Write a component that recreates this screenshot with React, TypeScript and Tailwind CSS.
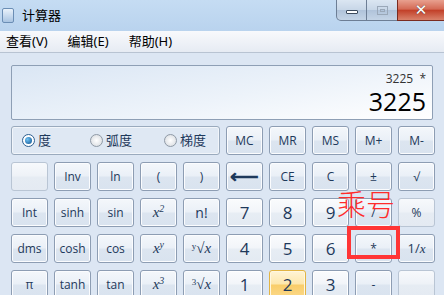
import React from "react";

const cjk = "'Noto Sans', 'Noto Sans CJK SC', sans-serif";

type Kind = "fn" | "digit" | "hot" | "pale";

interface Key {
  label: React.ReactNode;
  kind?: Kind;
}

function Btn({ label, kind = "fn" }: Key) {
  const base =
    "flex h-[29px] w-[37px] items-center justify-center rounded-[3px] border text-[#1e395b] leading-none";
  const skin: Record<Kind, string> = {
    fn: "border-[#8d9db3] bg-[linear-gradient(#f4f7fb_0%,#eaf0f7_48%,#dce5f0_52%,#d9e3ef_100%)] shadow-[inset_0_0_0_1px_#fbfcfe] text-[12px]",
    digit:
      "border-[#8d9db3] bg-[linear-gradient(#fafbfd_0%,#f2f5f9_48%,#e7edf4_52%,#e3eaf2_100%)] shadow-[inset_0_0_0_1px_#ffffff] text-[17px]",
    hot: "border-[#e2b443] bg-[linear-gradient(#fff4d6_0%,#fde7ad_48%,#f9cd6a_52%,#fbd98a_100%)] shadow-[inset_0_0_0_1px_#fff7e0] text-[17px]",
    pale: "border-[#b9c5d4] bg-[linear-gradient(#f7f9fc_0%,#eef2f7_48%,#e6ecf3_52%,#e4eaf2_100%)] text-[12px]",
  };
  return (
    <div className={`${base} ${skin[kind]}`} style={{ fontFamily: "'Open Sans', 'Noto Sans', sans-serif" }}>
      {label}
    </div>
  );
}

const M = ({ children }: { children: React.ReactNode }) => (
  <span className="text-[15px] italic" style={{ fontFamily: "'Liberation Serif', 'DejaVu Serif', serif" }}>
    {children}
  </span>
);

const left: Key[][] = [
  [{ label: "" , kind: "pale" }, { label: "Inv" }, { label: "ln" }, { label: "(" }, { label: ")" }],
  [
    { label: "Int" },
    { label: "sinh" },
    { label: "sin" },
    { label: <M>x<sup className="text-[10px]">2</sup></M> },
    { label: <span className="text-[14px]">n!</span> },
  ],
  [
    { label: "dms" },
    { label: "cosh" },
    { label: "cos" },
    { label: <M>x<sup className="text-[10px]">y</sup></M> },
    { label: <M><sup className="text-[9px] not-italic">y</sup>√x</M> },
  ],
  [
    { label: "π" },
    { label: "tanh" },
    { label: "tan" },
    { label: <M>x<sup className="text-[10px]">3</sup></M> },
    { label: <M><sup className="text-[9px] not-italic">3</sup>√x</M> },
  ],
];

const right: Key[][] = [
  [{ label: "MC" }, { label: "MR" }, { label: "MS" }, { label: "M+" }, { label: "M-" }],
  [
    { label: <span className="text-[20px] font-bold -mt-[2px]">⟵</span> },
    { label: "CE" },
    { label: "C" },
    { label: "±" },
    { label: "√" },
  ],
  [
    { label: "7", kind: "digit" },
    { label: "8", kind: "digit" },
    { label: "9", kind: "digit" },
    { label: "/" },
    { label: "%", kind: "pale" },
  ],
  [
    { label: "4", kind: "digit" },
    { label: "5", kind: "digit" },
    { label: "6", kind: "digit" },
    { label: "*" },
    { label: <span className="text-[13px]">1/<i style={{ fontFamily: "'Liberation Serif', serif" }}>x</i></span> },
  ],
  [
    { label: "1", kind: "digit" },
    { label: "2", kind: "hot" },
    { label: "3", kind: "digit" },
    { label: "-" },
    { label: "", kind: "pale" },
  ],
];

function Radio({ on, label }: { on?: boolean; label: string }) {
  return (
    <div className="flex items-center gap-[3px]">
      <span
        className={`flex h-[13px] w-[13px] items-center justify-center rounded-full border ${
          on ? "border-[#2c5e8f] bg-white" : "border-[#8f9aa6] bg-[radial-gradient(#ffffff,#d4d8dd)]"
        }`}
      >
        {on && <span className="h-[7px] w-[7px] rounded-full bg-[radial-gradient(circle_at_35%_35%,#6fc3f5,#0d4f8c)]" />}
      </span>
      <span className="text-[13px] text-[#1e395b]">{label}</span>
    </div>
  );
}

export default function App() {
  return (
    <div className="relative h-[295px] w-[444px] overflow-hidden bg-[#dce6f3]" style={{ fontFamily: cjk }}>
      {/* title bar */}
      <div className="flex h-[31px] items-start bg-[linear-gradient(#c5dcf3,#b9d3ee)]">
        <div className="ml-[2px] mt-[8px] h-[15px] w-[12px] rounded-[2px] border border-[#6b8eb5] bg-[linear-gradient(#e9f2fb,#a9c4e2)]" />
        <span className="ml-[8px] mt-[6px] text-[13px] text-black">计算器</span>
        <div className="ml-auto flex h-[21px]">
          <div className="flex w-[31px] items-center justify-center rounded-bl-[5px] border border-t-0 border-[#6d7e95] bg-[linear-gradient(#dbe6f2_0%,#c7d6e7_50%,#b0c3da_51%,#c4d4e6_100%)]">
            <span className="mt-[4px] h-[4px] w-[12px] rounded-[1px] border border-[#3c4a5c] bg-white" />
          </div>
          <div className="flex w-[30px] items-center justify-center border-b border-[#6d7e95] bg-[linear-gradient(#dbe6f2_0%,#c7d6e7_50%,#b0c3da_51%,#c4d4e6_100%)]">
            <span className="flex h-[9px] w-[11px] items-center justify-center border border-[#9aa8b9]">
              <span className="h-[3px] w-[5px] border border-[#9aa8b9]" />
            </span>
          </div>
          <div className="flex w-[47px] items-center justify-center border-b border-l border-[#7a2b20] bg-[linear-gradient(#e8a08f_0%,#d46a55_45%,#c2412a_52%,#d9826b_100%)]">
            <span className="text-[15px] font-bold leading-none text-white [text-shadow:0_0_1px_#333]" style={{ fontFamily: "'DejaVu Sans', sans-serif" }}>
              ✕
            </span>
          </div>
        </div>
      </div>

      {/* menu bar */}
      <div className="flex h-[22px] items-center gap-[20px] border-b border-[#b8c3d2] bg-[linear-gradient(#f8f9fc,#e6ebf3)] pl-[6px] text-[13px] text-black">
        <span>查看(V)</span>
        <span>编辑(E)</span>
        <span>帮助(H)</span>
      </div>

      {/* body */}
      <div className="px-[11px] pt-[12px]">
        <div className="flex h-[55px] flex-col items-end rounded-[2px] border border-[#8e9fb5] bg-[linear-gradient(170deg,#dae6f4_0%,#edf3fa_55%,#ffffff_100%)] pr-[6px] pt-[6px]">
          <div className="text-[12px] leading-[14px] text-[#333]" style={{ fontFamily: "'Open Sans', sans-serif" }}>
            3225&nbsp;&nbsp;*
          </div>
          <div className="text-[25px] leading-[30px] text-black" style={{ fontFamily: "'Open Sans', sans-serif" }}>
            3225
          </div>
        </div>

        <div className="mt-[6px] flex gap-[6px]">
          <div className="flex flex-col gap-[7px]">
            <div className="flex h-[29px] w-[209px] items-center rounded-[3px] border border-[#9aaabd] bg-[#dfe8f3] pl-[10px] shadow-[inset_0_0_0_1px_#f1f5fa]">
              <div className="w-[68px]"><Radio on label="度" /></div>
              <div className="w-[74px]"><Radio label="弧度" /></div>
              <Radio label="梯度" />
            </div>
            {left.map((row, i) => (
              <div key={i} className="flex gap-[6px]">
                {row.map((k, j) => (
                  <Btn key={j} {...k} />
                ))}
              </div>
            ))}
          </div>
          <div className="flex flex-col gap-[7px]">
            {right.map((row, i) => (
              <div key={i} className="flex gap-[6px]">
                {row.map((k, j) => (
                  <Btn key={j} {...k} />
                ))}
              </div>
            ))}
          </div>
        </div>
      </div>

      {/* annotation overlay */}
      <span
        className="absolute left-[337px] top-[189px] text-[29px] font-light leading-none text-[#ff2b2b]"
        style={{ fontFamily: "'Noto Sans CJK SC', sans-serif" }}
      >
        乘号
      </span>
      <div className="absolute left-[347px] top-[226px] h-[33px] w-[53px] border-[4px] border-[#ff3535]" />
    </div>
  );
}
